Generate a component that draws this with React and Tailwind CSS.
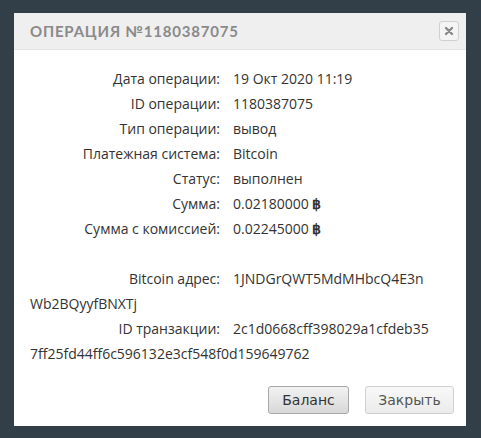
import React from 'react';

const rows = [
  ['Дата операции:', '19 Окт 2020 11:19'],
  ['ID операции:', '1180387075'],
  ['Тип операции:', 'вывод'],
  ['Платежная система:', 'Bitcoin'],
  ['Статус:', 'выполнен'],
  ['Сумма:', '0.02180000', true],
  ['Сумма с комиссией:', '0.02245000', true],
];

// длинные значения переносятся на следующую строку от левого края
const wrapRows = [
  ['Bitcoin адрес:', '1JNDGrQWT5MdMHbcQ4E3n', 'Wb2BQyyfBNXTj'],
  ['ID транзакции:', '2c1d0668cff398029a1cfdeb35', '7ff25fd44ff6c596132e3cf548f0d159649762'],
];

const Row = ({ label, value, rest, btc }) => (
  <div className="leading-[25px]">
    <span className="inline-block w-[190px] text-right">{label}</span>
    <span className="ml-[13px]">
      {value}
      {btc && <span className="font-bold"> ฿</span>}
    </span>
    {rest && (
      <>
        <br />
        <span>{rest}</span>
      </>
    )}
  </div>
);

export default function App() {
  return (
    <div className="w-[481px] h-[438px] bg-[#323f48] pt-[13px] pl-[14px]">
      <div className="w-[452px] h-[413px] bg-white flex flex-col">
        {/* Заголовок */}
        <div className="h-[37px] bg-[#efefef] border-b border-[#e4e4e4] flex items-center justify-between pl-[16px] pr-[7px]">
          <span
            className="text-[15px] font-bold tracking-[0.8px] text-[#8a8a8a]"
            style={{ fontFamily: 'Lato, "Open Sans", sans-serif' }}
          >
            ОПЕРАЦИЯ №1180387075
          </span>
          <button className="w-[20px] h-[20px] rounded-[3px] border border-[#d0d0d0] bg-[#f4f4f4] flex items-center justify-center">
            <svg width="10" height="10" viewBox="0 0 10 10">
              <path d="M2 2 L8 8 M8 2 L2 8" stroke="#888" strokeWidth="2.4" strokeLinecap="round" />
            </svg>
          </button>
        </div>

        {/* Содержимое */}
        <div
          className="flex-1 pt-[16px] pl-[16px] pr-[8px] text-[14px] text-[#333] whitespace-nowrap overflow-hidden"
          style={{ fontFamily: '"Open Sans", sans-serif' }}
        >
          {rows.map(([l, v, b]) => (
            <Row key={l} label={l} value={v} btc={b} />
          ))}
          <div className="h-[25px]" />
          {wrapRows.map(([l, v, r]) => (
            <Row key={l} label={l} value={v} rest={r} />
          ))}
        </div>

        {/* Кнопки */}
        <div
          className="flex justify-end gap-[16px] pr-[12px] pb-[12px] text-[14px]"
          style={{ fontFamily: '"DejaVu Sans", sans-serif' }}
        >
          <button className="w-[81px] h-[28px] rounded-[3px] border border-[#a8a8a8] bg-gradient-to-b from-[#f2f2f2] to-[#d8d8d8] text-[#333]">
            Баланс
          </button>
          <button className="w-[89px] h-[28px] rounded-[3px] border border-[#d0d0d0] bg-gradient-to-b from-[#f8f8f8] to-[#ebebeb] text-[#555]">
            Закрыть
          </button>
        </div>
      </div>
    </div>
  );
}
